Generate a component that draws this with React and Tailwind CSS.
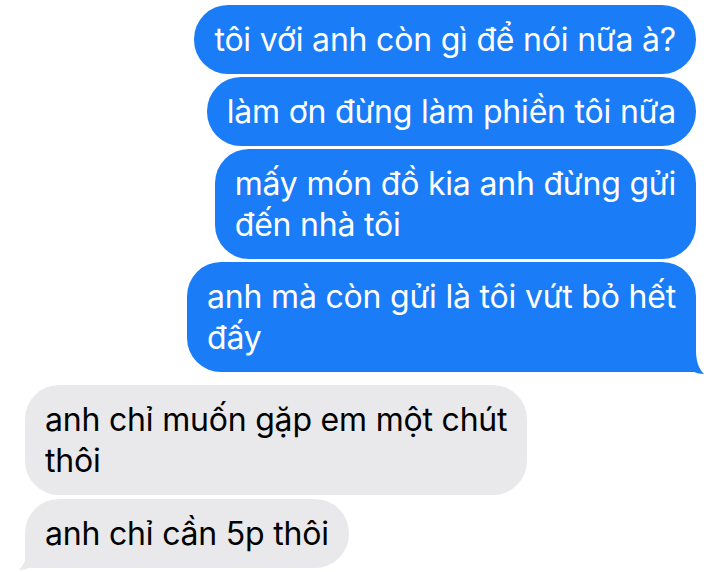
import React from 'react';

const messages = [
  { from: 'me', lines: ['tôi với anh còn gì để nói nữa à?'] },
  { from: 'me', lines: ['làm ơn đừng làm phiền tôi nữa'] },
  { from: 'me', lines: ['mấy món đồ kia anh đừng gửi', 'đến nhà tôi'] },
  { from: 'me', lines: ['anh mà còn gửi là tôi vứt bỏ hết', 'đấy'], tail: true },
  { from: 'them', lines: ['anh chỉ muốn gặp em một chút', 'thôi'] },
  { from: 'them', lines: ['anh chỉ cần 5p thôi'], tail: true },
];

const Tail = ({ side }) => {
  if (side === 'me') {
    return (
      <svg
        className="absolute right-[-8px] bottom-[-2px]"
        width="10"
        height="24"
        viewBox="0 0 10 24"
      >
        <path d="M0 0 H2 C2 12 5 19 10 24 C6 24 3 23 0 22 Z" fill="#1a7cf6" />
      </svg>
    );
  }
  return (
    <svg
      className="absolute left-[-6px] bottom-[-2px]"
      width="10"
      height="24"
      viewBox="0 0 10 24"
    >
      <path d="M10 0 H8 C8 12 5 19 0 24 C4 24 7 23 10 22 Z" fill="#e9e9eb" />
    </svg>
  );
};

const Bubble = ({ msg }) => {
  const mine = msg.from === 'me';
  return (
    <div
      className={
        mine
          ? 'relative self-end w-fit bg-[#1a7cf6] text-white rounded-[34px] px-[20px] py-[14px]' +
            (msg.tail ? ' rounded-br-none' : '')
          : 'relative self-start w-fit bg-[#e9e9eb] text-black rounded-[34px] px-[20px] py-[14px]' +
            (msg.tail ? ' rounded-bl-none' : '')
      }
    >
      <p className="text-[32px] leading-[41px] tracking-[-0.2px] whitespace-nowrap">
        {msg.lines.map((line, i) => (
          <React.Fragment key={i}>
            {i > 0 && <br />}
            {line}
          </React.Fragment>
        ))}
      </p>
      {msg.tail && <Tail side={msg.from} />}
    </div>
  );
};

export default function App() {
  return (
    <div
      className="w-[720px] h-[572px] bg-white overflow-hidden flex flex-col pt-[5px] pl-[25px] pr-[24px]"
      style={{ fontFamily: 'Inter, "Noto Sans", sans-serif' }}
    >
      <div className="flex flex-col gap-[3px]">
        {messages.slice(0, 4).map((m, i) => (
          <Bubble key={i} msg={m} />
        ))}
      </div>
      <div className="flex flex-col gap-[4px] mt-[13px]">
        {messages.slice(4).map((m, i) => (
          <Bubble key={i} msg={m} />
        ))}
      </div>
    </div>
  );
}
